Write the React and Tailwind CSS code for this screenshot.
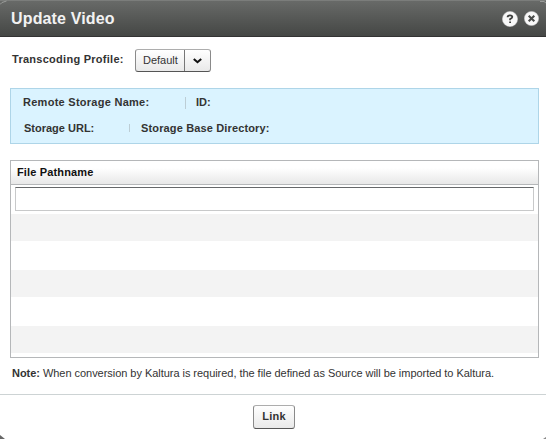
function HelpIcon() {
  return (
    <svg width="16" height="16" viewBox="0 0 16 16">
      <circle cx="8" cy="8" r="7.6" fill="#f8f8f8" stroke="#d0d0d0" strokeWidth="0.5" />
      <path d="M5.6 6.2Q5.6 4.4 8 4.4Q10.3 4.4 10.3 6.1Q10.3 7.2 8.1 8.1V9.3M8.1 10.4V12" fill="none" stroke="#3c3e3c" strokeWidth="1.8" />
    </svg>
  );
}

function CloseIcon() {
  return (
    <svg width="15" height="15" viewBox="0 0 15 15">
      <circle cx="7.5" cy="7.5" r="7.1" fill="#f8f8f8" stroke="#d0d0d0" strokeWidth="0.5" />
      <path d="M4.7 4.8L10.3 10.2M10.3 4.8L4.7 10.2" stroke="#4a4c4a" strokeWidth="2.1" />
    </svg>
  );
}

function Chevron() {
  return (
    <svg width="9" height="6" viewBox="0 0 9 6">
      <path d="M0.8 1L4.5 4.2L8.2 1" fill="none" stroke="#111" strokeWidth="2.1" />
    </svg>
  );
}

const button =
  "border border-t-[#adadad] border-x-[#8a8a8a] border-b-[#555] rounded-[3px] bg-linear-to-b from-white to-[#e9e9e9]";

export default function App() {
  return (
    <div className="relative flex h-[439px] w-[546px] flex-col overflow-hidden bg-white font-['Liberation_Sans',Arial,sans-serif] text-[11px] leading-[14px] text-[#333]">
      <header className="flex h-[37px] shrink-0 items-center border-t border-b border-t-[#7b7d7b] border-b-[#333] bg-linear-to-b from-[#686a68] to-[#454745] pr-[7px] pl-[11px]">
        <h1 className="flex-1 text-[16px] leading-[20px] font-bold tracking-[0.15px] text-[#f2f2f2]">Update Video</h1>
        <button className="mr-[6px]" aria-label="Help"><HelpIcon /></button>
        <button aria-label="Close"><CloseIcon /></button>
      </header>

      <main className="flex flex-col pr-[7px] pl-[10px]">
        <div className="mt-3 flex h-[23px]">
          <span className="w-[125px] pt-[3px] pl-[2px] font-bold tracking-[0.27px]">Transcoding Profile:</span>
          <button className={`flex w-[76px] ${button}`}>
            <span className="flex h-full w-[49px] items-center border-r border-[#777] pb-px pl-[7px]">Default</span>
            <span className="flex h-full flex-1 items-center justify-center pt-px"><Chevron /></span>
          </button>
        </div>

        <section className="mt-4 flex h-[56px] flex-col gap-3 border border-[#aed5e8] bg-[#daf3ff] pt-[6px] pl-3 font-bold">
          <div className="flex h-[14px]">
            <span className="w-[162px] tracking-[0.27px]">Remote Storage Name:</span>
            <span className="mt-[2px] mr-[10px] h-3 w-px bg-[#bccdd5]" />
            <span>ID:</span>
          </div>
          <div className="flex h-[14px]">
            <span className="w-[106px] pl-px">Storage URL:</span>
            <span className="mt-[3px] mr-[11px] h-2 w-px bg-[#bccdd5]" />
            <span className="tracking-[0.14px]">Storage Base Directory:</span>
          </div>
        </section>

        <section className="mt-4 h-[198px] border border-[#b5b7b9]">
          <div className="h-[24px] border-b border-[#b5b7b9] bg-linear-to-b from-white from-30% to-[#e8e8e8] pt-[4px] pl-[6px] font-bold tracking-[0.15px] text-[#111]">
            File Pathname
          </div>
          <div className="h-[29px] px-1 pt-[2px]">
            <input className="block h-[24px] w-full border border-[#c8c9ca] border-t-[#66686a] bg-white outline-none" />
          </div>
          <div className="h-[27px] bg-[#f3f3f3]" />
          <div className="h-[29px]" />
          <div className="h-[27px] bg-[#f3f3f3]" />
          <div className="h-[29px]" />
          <div className="h-[27px] bg-[#f3f3f3]" />
        </section>

        <p className="mt-[8px] pl-[2px] tracking-[-0.04px] whitespace-nowrap"><b>Note:</b> When conversion by Kaltura is required, the file defined as Source will be imported to Kaltura.</p>
      </main>

      <footer className="mt-[14px] flex flex-1 border-t border-[#cdd3d4] pt-[10px] pl-[253px]">
        <button className={`flex h-[24px] w-[42px] items-center justify-center pb-[2px] font-bold tracking-[0.22px] ${button}`}>Link</button>
      </footer>

      {/* Rounded window corners */}
      <svg className="absolute top-0 left-0" width="7" height="5"><path d="M0 4.5L2 2.5L6.5 1" fill="none" stroke="#9a9c9a" /></svg>
      <svg className="absolute top-0 right-0" width="6" height="4"><path d="M0 1.5H4L6 3" fill="none" stroke="#9a9c9a" /></svg>
      <svg className="absolute bottom-0 left-0" width="5" height="4"><path d="M0 0L5 4H0Z" fill="#666" /></svg>
      <svg className="absolute right-0 bottom-0" width="3" height="2"><path d="M3 0V2H0Z" fill="#888" /></svg>
    </div>
  );
}
